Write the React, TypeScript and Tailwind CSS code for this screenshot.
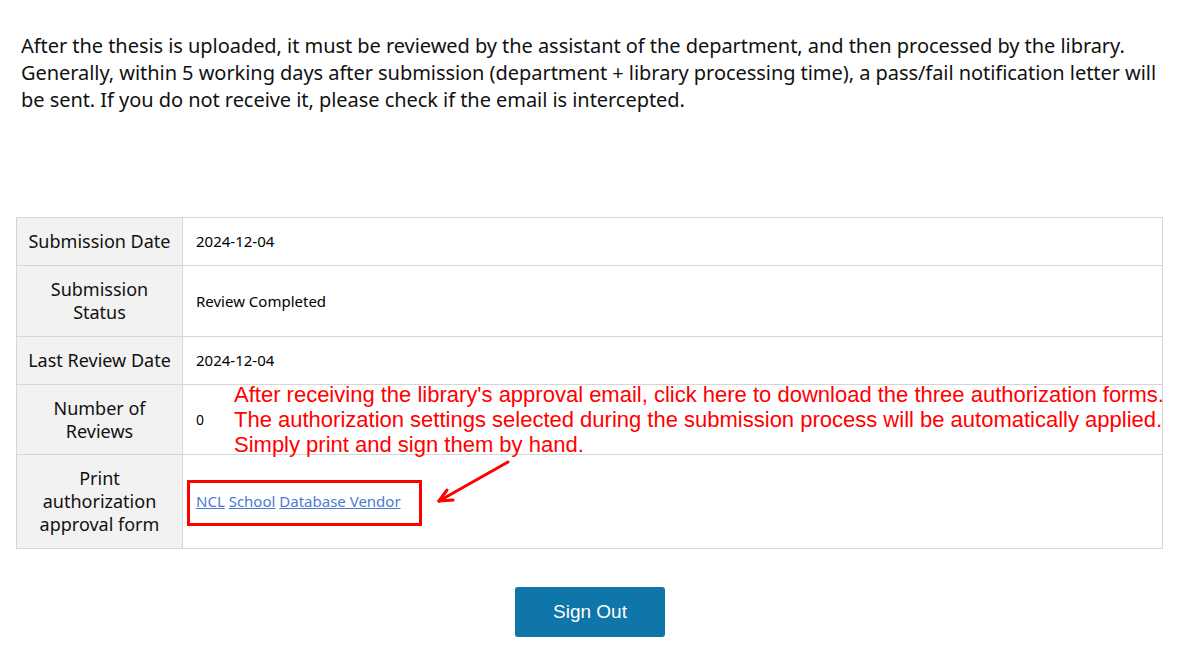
import React from "react";

const rows: { label: React.ReactNode; value: React.ReactNode; valueClass?: string; h: string }[] = [
  { label: "Submission Date", value: "2024-12-04", h: "h-[48px]" },
  { label: <>Submission<br />Status</>, value: "Review Completed", h: "h-[71px]" },
  { label: "Last Review Date", value: "2024-12-04", h: "h-[48px]" },
  { label: <>Number of<br />Reviews</>, value: "0", valueClass: "text-[14px]", h: "h-[70px]" },
  {
    label: <>Print<br />authorization<br />approval form</>,
    value: (
      <span className="text-[#4a7bd0]">
        <a href="#" className="underline">NCL</a>{" "}
        <a href="#" className="underline">School</a>{" "}
        <a href="#" className="underline">Database Vendor</a>
      </span>
    ),
    h: "h-[94px]",
  },
];

export default function App() {
  return (
    <div className="bg-white w-[1183px] h-[646px] overflow-hidden text-black" style={{ fontFamily: '"Noto Sans", sans-serif' }}>
      <p className="pt-[32px] pl-[21px] text-[20px] leading-[27px] tracking-[-0.05px] text-[#111] whitespace-nowrap">
        After the thesis is uploaded, it must be reviewed by the assistant of the department, and then processed by the library.
        <br />
        Generally, within 5 working days after submission (department + library processing time), a pass/fail notification letter will
        <br />
        be sent. If you do not receive it, please check if the email is intercepted.
      </p>

      <div className="relative mx-[16px] mt-[104px] w-[1147px]">
        <table className="w-full border-collapse border border-[#d6d6d6]">
          <tbody>
            {rows.map((r, i) => (
              <tr key={i} className={r.h}>
                <th className="w-[166px] bg-[#f2f2f2] border border-[#d6d6d6] py-0 px-[6px] text-[18px] leading-[23px] font-normal text-center text-[#111]">
                  {r.label}
                </th>
                <td className={`border border-[#d6d6d6] py-0 px-[13px] leading-[23px] ${r.valueClass ?? "text-[15px]"}`}>
                  {r.value}
                </td>
              </tr>
            ))}
          </tbody>
        </table>

        <div
          className="absolute left-[218px] top-[165px] text-[22px] leading-[25px] text-[#ff0000] whitespace-nowrap"
          style={{ fontFamily: '"Liberation Sans", Arial, sans-serif' }}
        >
          After receiving the library's approval email, click here to download the three authorization forms.
          <br />
          The authorization settings selected during the submission process will be automatically applied.
          <br />
          Simply print and sign them by hand.
        </div>

        <div className="absolute left-[171px] top-[263px] w-[235px] h-[46px] border-[3px] border-[#ff0000]" />

        <svg className="absolute left-[410px] top-[236px]" width="110" height="60" viewBox="0 0 110 60">
          <g stroke="#ff0000" strokeWidth="3" strokeLinecap="round" fill="none">
            <line x1="82" y1="9" x2="13" y2="48" />
            <line x1="13" y1="48" x2="21" y2="37" />
            <line x1="13" y1="48" x2="27" y2="47" />
          </g>
        </svg>
      </div>

      <div className="flex justify-center mt-[38px] pr-[3px]">
        <button
          className="w-[150px] h-[50px] rounded-[3px] bg-[#0e76a8] text-white text-[19px]"
          style={{ fontFamily: '"Liberation Sans", Arial, sans-serif' }}
        >
          Sign Out
        </button>
      </div>
    </div>
  );
}
